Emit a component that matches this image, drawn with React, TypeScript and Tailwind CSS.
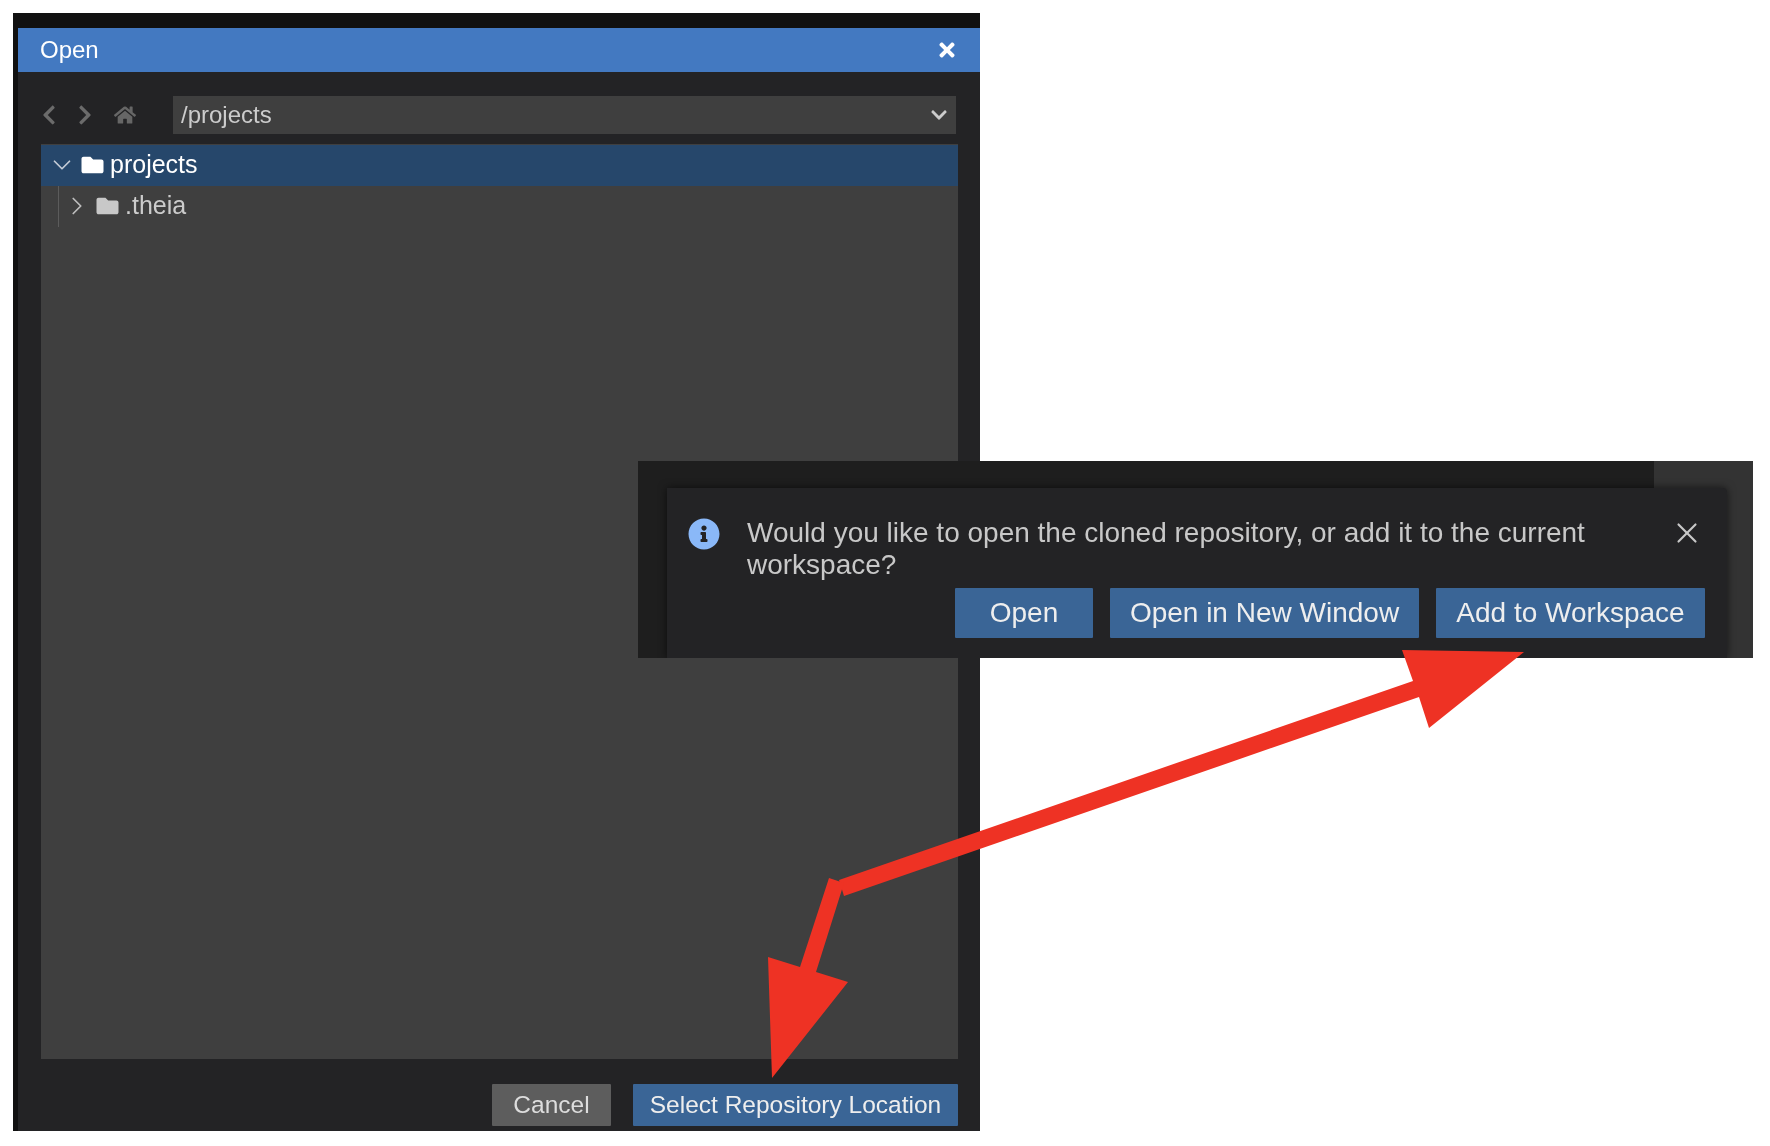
import React from 'react';
import { FaChevronDown, FaChevronLeft, FaChevronRight, FaFolder, FaHome, FaInfoCircle, FaTimes } from 'react-icons/fa';
import { ChevronDown, ChevronRight, X } from 'lucide-react';

const TreeRow: React.FC<{ label: string; open?: boolean; selected?: boolean }> = ({ label, open, selected }) => {
  const Chevron = open ? ChevronDown : ChevronRight;
  return (
    <div className={`h-[41px] pb-[1px] flex items-center ${selected ? 'bg-[#26476b] text-white pl-[6px]' : 'text-[#cccccc] pl-[21px]'}`}>
      <Chevron className={`w-[30px] h-[30px] stroke-[1.4] ${selected ? 'text-[#c4ccd6]' : 'text-[#bdbdbd]'}`} />
      <FaFolder className={`w-[23px] h-[22px] ml-[4px] ${selected ? 'text-white' : 'text-[#c8c8c8]'}`} />
      <span className="ml-[6px] text-[25px]">{label}</span>
    </div>
  );
};

const Notification: React.FC = () => (
  <div className="absolute left-[638px] top-[461px] w-[1115px] h-[197px] overflow-hidden bg-[#1e1e1e] pl-[29px] pt-[27px] blur-[0.6px]">
    <div className="absolute right-0 top-0 w-[99px] h-full bg-[#333333]" />
    <div className="relative w-[1060px] h-[170px] bg-[#232325] rounded-tr-[4px] shadow-[0_0_8px_rgba(0,0,0,0.6)] pt-[29px]">
      <div className="flex">
        <FaInfoCircle className="ml-[21px] mt-[1px] w-[32px] h-[32px] text-[#8ab8f8] shrink-0" />
        <p className="ml-[27px] w-[905px] text-[28px] leading-[32px] text-[#c8c8c8]">
          Would you like to open the cloned repository, or add it to the current workspace?
        </p>
        <X className="ml-[18px] mt-[-1px] w-[34px] h-[34px] stroke-[1.5] text-[#c8c8c8] shrink-0" />
      </div>
      <div className="flex justify-end gap-[17px] pr-[22px] mt-[7px]">
        <button className="w-[138px] h-[50px] bg-[#3a6596] rounded-[1px] text-[28px] text-[#eeeeee]">Open</button>
        <button className="w-[309px] h-[50px] bg-[#3a6596] rounded-[1px] text-[28px] text-[#eeeeee]">Open in New Window</button>
        <button className="w-[269px] h-[50px] bg-[#3a6596] rounded-[1px] text-[28px] text-[#eeeeee]">Add to Workspace</button>
      </div>
    </div>
  </div>
);

const Arrows: React.FC = () => (
  <svg className="absolute left-0 top-0 w-[1770px] h-[1146px]" viewBox="0 0 1770 1146">
    <polygon fill="#ee3224" points="1402,650 1524,652 1429,728 1419,697 844,896 839,880 1413,681" />
    <polygon fill="#ee3224" points="829,878 844,883 816,972 848,982 772,1078 768,957 800,967" />
  </svg>
);

export default function App() {
  return (
    <div className="relative w-[1770px] h-[1146px] bg-white overflow-hidden font-['Liberation_Sans',Arial,sans-serif] pt-[13px] pl-[13px]">
      <div className="w-[967px] h-[1118px] bg-[#232325] border-l-[5px] border-[#111111] flex flex-col blur-[0.6px]">
        <div className="h-[15px] -ml-[5px] bg-[#111111]" />
        <div className="h-[44px] bg-[#4379c1] flex items-center justify-between pl-[22px] pr-[22px] text-white">
          <span className="text-[24px]">Open</span>
          <FaTimes className="w-[22px] h-[22px]" />
        </div>
        <div className="flex items-center mt-[24px] h-[38px] pl-[23px] pr-[24px]">
          <FaChevronLeft className="w-[16px] h-[22px] text-[#6b6b6b]" />
          <FaChevronRight className="ml-[20px] w-[16px] h-[22px] text-[#6b6b6b]" />
          <FaHome className="ml-[21px] w-[22px] h-[20px] text-[#666666]" />
          <div className="ml-[37px] flex-1 h-full bg-[#3f3f3f] flex items-center justify-between pl-[8px] pr-[8px] text-[24px] text-[#cccccc]">
            <span>/projects</span>
            <FaChevronDown className="w-[18px] h-[18px] text-[#cccccc]" />
          </div>
        </div>
        <div className="relative mt-[10px] ml-[23px] mr-[22px] h-[915px] bg-[#3f3f3f]">
          <div className="border-t-[1px] border-[#3f3f3f]">
            <TreeRow label="projects" open selected />
            <div className="relative">
              <div className="absolute left-[17px] top-0 w-px h-full bg-[#5c5c5c]" />
              <TreeRow label=".theia" />
            </div>
          </div>
        </div>
        <div className="flex justify-end gap-[22px] mt-[25px] mr-[22px]">
          <button className="w-[119px] h-[42px] bg-[#5d5d5d] rounded-[1px] text-[24.5px] text-[#dddddd]">Cancel</button>
          <button className="w-[325px] h-[42px] bg-[#3a6596] rounded-[1px] text-[24.5px] text-[#eeeeee]">Select Repository Location</button>
        </div>
      </div>
      <Notification />
      <Arrows />
    </div>
  );
}
